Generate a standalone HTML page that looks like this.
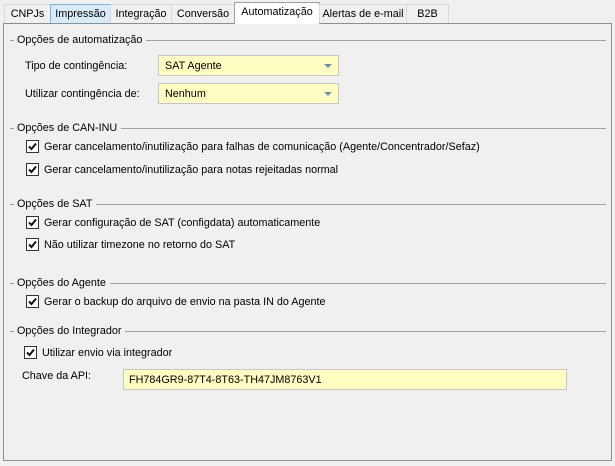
<!DOCTYPE html><html><head><style>
body{margin:0;width:615px;height:466px;background:#f0f0f0;font-family:"Liberation Sans",sans-serif;font-size:10.8px;color:#000;position:relative;overflow:hidden}
.a{position:absolute;white-space:nowrap}
.tab{position:absolute;top:4px;height:19px;border:1px solid #d9d9d9;border-bottom:none;box-sizing:border-box;line-height:19px;text-align:center;background:#f0f0f0;white-space:nowrap}
.panel{position:absolute;left:3px;top:23px;width:609px;height:438px;border:1px solid #8e8e8e;box-sizing:border-box;background:#f0f0f0}
.g{position:absolute;left:10px;height:1px;background:#a0a0a0}
.gt{position:absolute;left:14px;background:#f0f0f0;padding:0 4px 0 3px;line-height:14px}
.cb{position:absolute;width:13px;height:13px;border:1px solid #333;box-sizing:border-box;background:#fff}
.cb svg{position:absolute;left:0;top:0}
.combo{position:absolute;left:158px;width:181px;height:21px;border:1px solid #c6c6c6;box-sizing:border-box;background:#ffffc2;line-height:20px;padding-left:6px}
.combo:after{content:"";position:absolute;right:6px;top:8px;border-left:4px solid transparent;border-right:4px solid transparent;border-top:4px solid #6d8bb3}
</style></head><body>
<div class="panel"></div>
<div class="tab" style="left:4px;width:47px">CNPJs</div>
<div class="tab" style="left:50px;width:61px;background:#d9ebf9;border-color:#7eb4ea">Impressão</div>
<div class="tab" style="left:110px;width:62px">Integração</div>
<div class="tab" style="left:171px;width:64px">Conversão</div>
<div class="tab" style="left:234px;top:2px;height:22px;width:86px;background:#fff;border-color:#a0a0a0;line-height:18px">Automatização</div>
<div class="tab" style="left:319px;width:88px">Alertas de e-mail</div>
<div class="tab" style="left:406px;width:43px">B2B</div>

<div class="g" style="top:40px;width:596px"></div><div class="a gt" style="top:33px">Opções de automatização</div>
<div class="a" style="left:25px;top:60px">Tipo de contingência:</div>
<div class="combo" style="top:55px">SAT Agente</div>
<div class="a" style="left:25px;top:88px">Utilizar contingência de:</div>
<div class="combo" style="top:83px">Nenhum</div>

<div class="g" style="top:128px;width:596px"></div><div class="a gt" style="top:121px">Opções de CAN-INU</div>
<div class="cb" style="left:26px;top:140px"><svg width="11" height="11"><path d="M2 5.5 L4.5 8 L9 2.5" stroke="#111" stroke-width="2" fill="none"/></svg></div>
<div class="a" style="left:44px;top:141px">Gerar cancelamento/inutilização para falhas de comunicação (Agente/Concentrador/Sefaz)</div>
<div class="cb" style="left:26px;top:163px"><svg width="11" height="11"><path d="M2 5.5 L4.5 8 L9 2.5" stroke="#111" stroke-width="2" fill="none"/></svg></div>
<div class="a" style="left:44px;top:164px">Gerar cancelamento/inutilização para notas rejeitadas normal</div>

<div class="g" style="top:204px;width:596px"></div><div class="a gt" style="top:197px">Opções de SAT</div>
<div class="cb" style="left:26px;top:216px"><svg width="11" height="11"><path d="M2 5.5 L4.5 8 L9 2.5" stroke="#111" stroke-width="2" fill="none"/></svg></div>
<div class="a" style="left:44px;top:217px">Gerar configuração de SAT (configdata) automaticamente</div>
<div class="cb" style="left:26px;top:238px"><svg width="11" height="11"><path d="M2 5.5 L4.5 8 L9 2.5" stroke="#111" stroke-width="2" fill="none"/></svg></div>
<div class="a" style="left:44px;top:239px">Não utilizar timezone no retorno do SAT</div>

<div class="g" style="top:283px;width:596px"></div><div class="a gt" style="top:276px">Opções do Agente</div>
<div class="cb" style="left:26px;top:295px"><svg width="11" height="11"><path d="M2 5.5 L4.5 8 L9 2.5" stroke="#111" stroke-width="2" fill="none"/></svg></div>
<div class="a" style="left:44px;top:296px">Gerar o backup do arquivo de envio na pasta IN do Agente</div>

<div class="g" style="top:331px;width:596px"></div><div class="a gt" style="top:324px">Opções do Integrador</div>
<div class="cb" style="left:24px;top:346px"><svg width="11" height="11"><path d="M2 5.5 L4.5 8 L9 2.5" stroke="#111" stroke-width="2" fill="none"/></svg></div>
<div class="a" style="left:42px;top:347px">Utilizar envio via integrador</div>
<div class="a" style="left:22px;top:370px">Chave da API:</div>
<div class="a" style="left:123px;top:369px;width:444px;height:21px;border:1px solid #c6c6c6;box-sizing:border-box;background:#ffffc2;line-height:20px;padding-left:5px">FH784GR9-87T4-8T63-TH47JM8763V1</div>
</body></html>
